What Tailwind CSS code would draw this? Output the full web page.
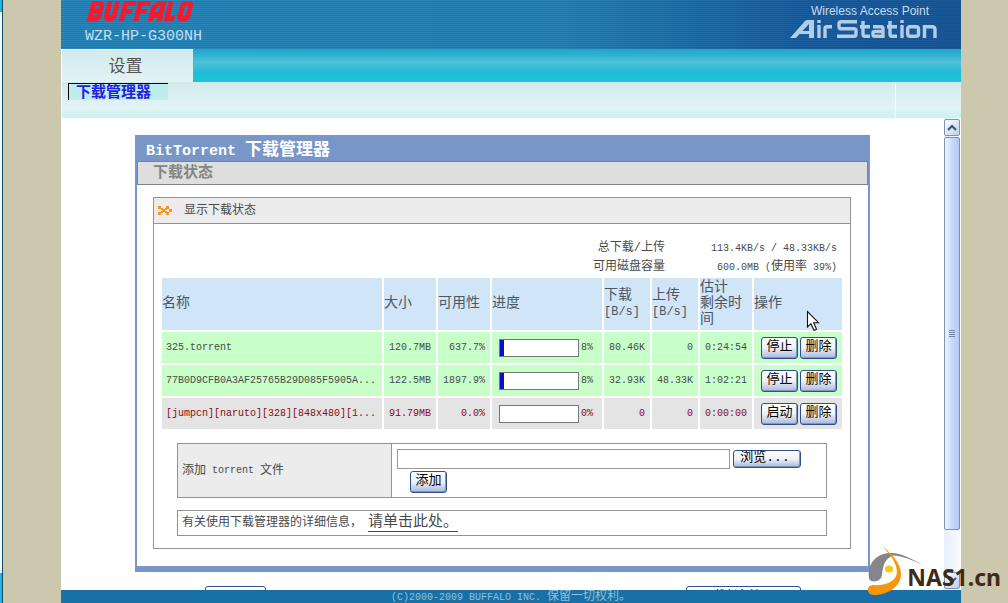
<!DOCTYPE html>
<html lang="zh-CN">
<head>
<meta charset="utf-8">
<title>WZR-HP-G300NH - BitTorrent 下载管理器</title>
<script src="https://cdn.jsdelivr.net/npm/@tailwindcss/browser@4"></script>
</head>
<body class="relative flex h-screen overflow-hidden bg-[#cbc8ae] font-['Liberation_Mono','Noto_Sans_CJK_SC',monospace] text-[10px] leading-[18px] text-[#4a4a4a]">
<div class="flex w-[3px] flex-none flex-col border-r border-[#1c4a63] bg-[#e8fbff]">
  <div class="h-3 bg-[#1fb4dc]"></div>
  <div class="mt-auto h-[30px] bg-[#1fb4dc]"></div>
</div>

<div class="mr-[47px] ml-[58px] flex min-w-0 flex-1 flex-col bg-white">
  <header class="flex h-[49px] flex-none justify-between bg-[repeating-linear-gradient(to_bottom,transparent_0_1px,#0a3f7838_1px_2px),linear-gradient(to_right,#2b87ba,#2a83b5_55%,#1b5d9c_82%,#1a5696)] pr-[22px] pl-6">
    <div>
      <svg class="block h-[22px] w-[110px]" viewBox="0 0 110 22" role="img" aria-label="BUFFALO" fill="none" stroke="#ee1c2e" stroke-width="5">
        <g transform="translate(3.5 0) skewX(-14) translate(2 0)">
          <path d="M4 1V21M1.500 3.500H10.500L12.500 5V9L10.500 11H4M10.500 11L12.500 13V17L10.500 18.500H1.500"/>
          <path d="M20 1V17L21.500 18.500H26L27.500 17V1"/>
          <path d="M36 21V3.500H46.500M36 11.500H44.500"/>
          <path d="M50.500 21V3.500H61M50.500 11.500H59"/>
          <path d="M65 21V8L69 3.500H74V21M65 14.500H74"/>
          <path d="M81 1V18.500H88.500"/>
          <path d="M95 3.500H100L101.500 5V17L100 18.500H95L93.500 17V5Z"/>
        </g>
      </svg>
      <p class="mt-[5px] text-[15px] leading-5 text-[#c3ddee]">WZR-HP-G300NH</p>
    </div>
    <div class="flex flex-col items-end pt-1">
      <p class="pr-2.5 font-['Liberation_Sans',sans-serif] text-[12px] leading-[14px] text-[#c9dbea]">Wireless Access Point</p>
      <svg class="block h-6 w-[150px]" viewBox="0 0 150 24" role="img" aria-label="AirStation" fill="none" stroke="#b3cde6" stroke-width="3.400">
        <path fill="#b3cde6" stroke="none" d="M1 20L16 3Q17 2 19 2H25V20H20V16H10.500L7 20ZM13.500 13H20V6Z"/>
        <path d="M30 7V20M30 2V5M36 20V10.500Q36 8.700 38 8.700H43M68 3.700H52Q50 3.700 50 5.500V8.500Q50 10.700 52 10.700H65Q67 10.700 67 12.700V16.300Q67 18.300 65 18.300H48M74 3V16Q74 18.300 76 18.300H81M71 8.700H81M84 8.700H92Q94 8.700 94 10.700V18.300H86Q84 18.300 84 16.700V15Q84 13.500 86 13.500H94M101 3V16Q101 18.300 103 18.300H108M98 8.700H108M113 7V20M113 2V5M120 8.700H127Q129.500 8.700 129.500 11V16Q129.500 18.300 127 18.300H121Q118.700 18.300 118.700 16V11Q118.700 8.700 121 8.700ZM135.500 20V8.700H143Q146 8.700 146 11.500V20"/>
      </svg>
    </div>
  </header>

  <nav class="flex flex-none flex-col" aria-label="主菜单">
    <div class="flex h-[33px] bg-[linear-gradient(to_bottom,#23a5c4,#28b0d0_15%,#52bfd8_38%,#22bcd6_70%,#18c6d8)]">
      <a href="#" class="flex w-[132px] items-center justify-center border-t border-l border-white bg-[linear-gradient(to_bottom,#d2eaed,#e3f3f4)] pr-1 pb-0.5 font-['Noto_Sans_CJK_SC',sans-serif] text-[17px] leading-6 text-[#555]">设置</a>
    </div>
    <div class="flex h-9 border-l border-white bg-[linear-gradient(to_bottom,#d3eaed,#e2f3f5_70%,#caf2f2)]">
      <div class="flex-1 pt-px pl-1.5">
        <a href="#" class="block h-[17px] w-[100px] border-t border-l border-black bg-[#bdeeee] pl-[7px] font-['Noto_Sans_CJK_SC',sans-serif] text-[15px] leading-[13px] font-bold text-[#2420e0]">下载管理器</a>
      </div>
      <div class="w-[66px] border-l border-white"></div>
    </div>
  </nav>

  <div class="flex min-h-0 flex-1">
    <main class="min-w-0 flex-1 overflow-hidden px-[74px] pt-[17px]">
      <section class="border-x-2 border-b-[6px] border-[#7896c8]">
        <h1 class="h-[26px] bg-[#7896c8] pl-[9px] text-[15px] leading-8 font-bold text-white">BitTorrent <span class="text-[17px]">下载管理器</span></h1>
        <h2 class="h-6 border border-[#808085] bg-[#dedede] pl-[15px] font-['Noto_Sans_CJK_SC',sans-serif] text-[15px] leading-[18px] font-bold text-[#858585]">下载状态</h2>
        <div class="mr-[17px] mt-3 mb-[17px] ml-4 border border-[#939393]">
          <h3 class="flex h-[26px] items-center gap-3 border-b border-[#939393] bg-[#ececec] pl-1 text-[12px]">
            <svg class="h-[9px] w-[14px]" viewBox="0 0 14 9" fill="#f9951b" aria-hidden="true"><path d="M0 0h3v3h-3zM3 2h2v2h-2zM4 3h3v3h-3zM3 5h2v2h-2zM0 6h3v3h-3zM7 2h2v2h-2zM7 5h2v2h-2zM8 0h3v3h-3zM11 3h3v3h-3zM8 6h3v3h-3z"/></svg>
            显示下载状态
          </h3>
          <dl class="grid grid-cols-[1fr_172px] pt-[15px] pr-[13px] text-right">
            <dt class="text-[12px]">总下载/上传</dt><dd class="pt-px">113.4KB/s / 48.33KB/s</dd>
            <dt class="text-[12px]">可用磁盘容量</dt><dd>600.0MB (<span class="text-[12px]">使用率</span> 39%)</dd>
          </dl>
          <div class="-mt-px px-1.5">
            <table class="w-full table-fixed border-separate border-spacing-0.5 text-right">
              <colgroup><col><col class="w-[52px]"><col class="w-[52px]"><col class="w-[110px]"><col class="w-[46px]"><col class="w-[46px]"><col class="w-[52px]"><col class="w-[88px]"></colgroup>
              <thead>
                <tr class="h-[52px] bg-[#d0e5f8] text-left text-[14px] leading-4 text-[#4c5660] *:p-0 *:pb-0.5 *:font-normal">
                  <th>名称</th><th>大小</th><th>可用性</th><th>进度</th>
                  <th>下载<br><span class="text-[12px]">[B/s]</span></th><th>上传<br><span class="text-[12px]">[B/s]</span></th><th>估计<br>剩余时间</th><th>操作</th>
                </tr>
              </thead>
              <tbody class="leading-4">
                <tr class="h-[31px] bg-[#c8fec8] *:py-0 *:pr-[5px]">
                  <td class="pl-1 text-left">325.torrent</td><td>120.7MB</td><td>637.7%</td>
                  <td><div class="flex items-center gap-0.5 pl-[7px]"><div class="h-[18px] w-20 border border-[#777] bg-white"><div class="h-full bg-[#0c0cd8]" style="width:4px"></div></div>8%</div></td>
                  <td>80.46K</td><td>0</td><td>0:24:54</td>
                  <td><div class="flex justify-end gap-0.5"><button class="h-[22px] w-[37px] rounded-[3px] border border-[#2f4f8c] bg-linear-to-b from-white via-[#eef1f8] to-[#a9b9da] pb-0.5 text-[13px] leading-[14px] text-black shadow-[inset_-1px_-1px_0_#8095c0]">停止</button><button class="h-[22px] w-[37px] rounded-[3px] border border-[#2f4f8c] bg-linear-to-b from-white via-[#eef1f8] to-[#a9b9da] pb-0.5 text-[13px] leading-[14px] text-black shadow-[inset_-1px_-1px_0_#8095c0]">删除</button></div></td>
                </tr>
                <tr class="h-[31px] bg-[#c8fec8] *:py-0 *:pr-[5px]">
                  <td class="truncate pl-1 text-left">77B0D9CFB0A3AF25765B29D085F5905A...</td><td>122.5MB</td><td>1897.9%</td>
                  <td><div class="flex items-center gap-0.5 pl-[7px]"><div class="h-[18px] w-20 border border-[#777] bg-white"><div class="h-full bg-[#0c0cd8]" style="width:4px"></div></div>8%</div></td>
                  <td>32.93K</td><td>48.33K</td><td>1:02:21</td>
                  <td><div class="flex justify-end gap-0.5"><button class="h-[22px] w-[37px] rounded-[3px] border border-[#2f4f8c] bg-linear-to-b from-white via-[#eef1f8] to-[#a9b9da] pb-0.5 text-[13px] leading-[14px] text-black shadow-[inset_-1px_-1px_0_#8095c0]">停止</button><button class="h-[22px] w-[37px] rounded-[3px] border border-[#2f4f8c] bg-linear-to-b from-white via-[#eef1f8] to-[#a9b9da] pb-0.5 text-[13px] leading-[14px] text-black shadow-[inset_-1px_-1px_0_#8095c0]">删除</button></div></td>
                </tr>
                <tr class="h-[31px] bg-[#e4e4e4] text-[#8c0a14] *:py-0 *:pr-[5px]">
                  <td class="truncate pl-1 text-left">[jumpcn][naruto][328][848x480][1...</td><td>91.79MB</td><td>0.0%</td>
                  <td><div class="flex items-center gap-0.5 pl-[7px]"><div class="h-[18px] w-20 border border-[#777] bg-white"></div>0%</div></td>
                  <td>0</td><td>0</td><td>0:00:00</td>
                  <td><div class="flex justify-end gap-0.5"><button class="h-[22px] w-[37px] rounded-[3px] border border-[#2f4f8c] bg-linear-to-b from-white via-[#eef1f8] to-[#a9b9da] pb-0.5 text-[13px] leading-[14px] text-black shadow-[inset_-1px_-1px_0_#8095c0]">启动</button><button class="h-[22px] w-[37px] rounded-[3px] border border-[#2f4f8c] bg-linear-to-b from-white via-[#eef1f8] to-[#a9b9da] pb-0.5 text-[13px] leading-[14px] text-black shadow-[inset_-1px_-1px_0_#8095c0]">删除</button></div></td>
                </tr>
              </tbody>
            </table>
          </div>
          <form class="mx-[23px] mt-3 flex h-[55px] border border-[#939393]">
            <label for="torrent" class="flex w-[214px] items-center border-r border-[#939393] bg-[#ececec] pl-1 whitespace-pre"><span class="text-[12px]">添加</span> torrent <span class="text-[12px]">文件</span></label>
            <div class="flex-1 pt-[5px] pr-[25px] pl-[5px]">
              <div class="flex items-center gap-[3px]">
                <input id="torrent" type="text" class="h-5 min-w-0 flex-1 border border-[#999] bg-white px-1 text-[12px]">
                <button type="button" class="h-[18px] w-[68px] rounded-[3px] border border-[#2f4f8c] bg-linear-to-b from-white via-[#eef1f8] to-[#a9b9da] pr-1 pb-0.5 text-[13px] leading-[12px] text-black shadow-[inset_-1px_-1px_0_#8095c0]">浏览...</button>
              </div>
              <button type="button" class="mt-0.5 ml-[13px] block h-[22px] w-[37px] rounded-[3px] border border-[#2f4f8c] bg-linear-to-b from-white via-[#eef1f8] to-[#a9b9da] pb-0.5 text-[13px] leading-[14px] text-black shadow-[inset_-1px_-1px_0_#8095c0]">添加</button>
            </div>
          </form>
          <p class="mx-[23px] mt-3 mb-3 flex h-[26px] items-center border border-[#939393] pl-1 text-[12px]">有关使用下载管理器的详细信息，<a href="#" class="ml-1.5 border-b border-[#4a4a4a] text-[15px] leading-4">请单击此处。</a></p>
        </div>
      </section>
      <div class="mt-3.5 flex justify-between pr-[69px] pl-[70px]">
        <button class="h-[22px] w-[61px] rounded-[3px] border border-[#2f4f8c] bg-white" aria-label="刷新"></button>
        <button class="h-[22px] w-[115px] rounded-[3px] border border-[#2f4f8c] bg-white text-[12px] leading-[14px] text-black">下载任务管理器</button>
      </div>
    </main>
    <div class="flex w-[17px] flex-none flex-col border-r border-white bg-linear-to-r from-[#e6effc] to-[#f8fbff] pt-px pb-px" aria-hidden="true">
      <div class="flex h-[17px] flex-none items-center justify-center rounded-[2px] border border-[#7f93b0] bg-linear-to-br from-white to-[#b9cef3]">
        <svg class="h-[7px] w-[10px]" viewBox="0 0 10 7" fill="none" stroke="#46566c" stroke-width="2.200"><path d="M1 6L5 2L9 6"/></svg>
      </div>
      <div class="mt-px flex h-[393px] flex-none flex-col items-center justify-center gap-px rounded-[2px] border border-[#7f93b0] bg-linear-to-r from-[#eef4ff] via-[#c8dafa] to-[#b2caf4]">
        <i class="h-px w-1.5 bg-[#7288aa]"></i><i class="h-px w-1.5 bg-[#7288aa]"></i><i class="h-px w-1.5 bg-[#7288aa]"></i><i class="h-px w-1.5 bg-[#7288aa]"></i>
      </div>
      <div class="mt-auto flex h-[17px] flex-none items-center justify-center rounded-[2px] border border-[#7f93b0] bg-linear-to-br from-white to-[#b9cef3]">
        <svg class="h-[7px] w-[10px]" viewBox="0 0 10 7" fill="none" stroke="#46566c" stroke-width="2.200"><path d="M1 1L5 5L9 1"/></svg>
      </div>
    </div>
  </div>
  <footer class="h-[13px] flex-none overflow-hidden bg-[#1870a6] text-center leading-[14px] text-[#8cc0dd]">(C)2000-2009 BUFFALO INC. <span class="text-[12px]">保留一切权利。</span></footer>
</div>

<svg class="absolute top-[310px] left-[806px] h-[22px] w-[14px]" viewBox="0 0 14 22" fill="#fff" stroke="#111" stroke-width="1.100" aria-hidden="true"><path d="M1.500 1.500V17L5 13.700L8 20.500L10.500 19.300L7.700 12.700H12.500Z"/></svg>

<div class="absolute right-[7px] bottom-1 flex items-end">
  <svg class="h-[54px] w-[60px]" viewBox="0 0 60 54" aria-hidden="true">
    <path fill="#85868a" d="M4 33C2 18 12 8 26 8C38 8 48 15 58 20C47 15 38 11 28 10.500C20 14 18 20 17 30C16 38 4 38 4 33Z"/>
    <path fill="#f7960d" d="M18 1C27 10 36 18 36 29C36 42 22 50 9 50C1 50 1 40 8 40C20 41 32 37 32 26C31 16 24 9 18 1Z"/>
    <ellipse cx="24" cy="24" rx="4.200" ry="3.600" fill="#f8c81c"/>
  </svg>
  <strong class="-ml-[18px] font-['Noto_Sans',sans-serif] text-[23px] leading-[44px] text-[#3f2a18]">NAS1.cn</strong>
</div>
</body>
</html>
